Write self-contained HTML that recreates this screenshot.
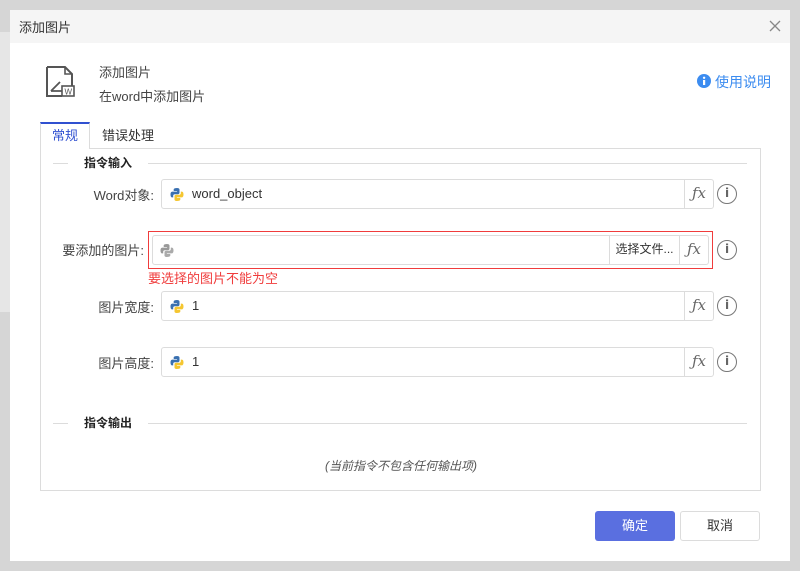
<!DOCTYPE html>
<html><head><meta charset="utf-8"><style>
*{box-sizing:border-box;margin:0;padding:0}
body{width:800px;height:571px;background:#d6d6d6;font-family:"Liberation Sans","Noto Sans CJK SC",sans-serif;font-size:13px;color:#333;position:relative;overflow:hidden}
.dlg{position:absolute;left:10px;top:10px;width:780px;height:551px;background:#fff}
.hd{position:absolute;left:0;top:0;width:780px;height:33px;background:#f5f5f5}
.a{position:absolute}
.inp{position:absolute;border:1px solid #dcdcdc;border-radius:3px;background:#fff}
.fx{position:absolute;right:0;top:0;width:29px;height:100%;border-left:1px solid #dcdcdc;font-family:"DejaVu Serif",serif;font-style:italic;color:#666;font-size:15px;text-align:center;line-height:27px}
.info{position:absolute;width:20px;height:20px;border:1.5px solid #777;border-radius:50%;color:#666;font-size:12px;font-weight:bold;text-align:center;line-height:17px;font-family:"DejaVu Sans",sans-serif}
.lbl{position:absolute;text-align:right;width:120px;color:#444}
.hl{position:absolute;height:1px;background:#dcdcdc}
</style></head><body>
<div class="a" style="left:0;top:32px;width:10px;height:280px;background:#e6e6e6"></div>
<div class="dlg">
<div class="hd"><span class="a" style="left:9px;top:7px;font-size:13px;color:#333">添加图片</span>
<svg class="a" style="left:759px;top:10px" width="12" height="12"><path d="M1 1L11 11M11 1L1 11" stroke="#888" stroke-width="1.3"/></svg></div>
<svg class="a" style="left:35px;top:55px" width="32" height="34" viewBox="0 0 32 34"><path d="M2 2H20L27 9V21M17 31H2V2" fill="none" stroke="#555" stroke-width="2"/><path d="M20 2V9H27" fill="none" stroke="#555" stroke-width="1.6"/><path d="M6 26L15 17M6 26H17" stroke="#555" stroke-width="1.8" fill="none"/><rect x="17" y="21" width="12" height="10" fill="#fff" stroke="#555" stroke-width="1.6"/><text x="19.5" y="29.5" font-size="8" fill="#555" font-family="Liberation Sans">W</text></svg>
<span class="a" style="left:89px;top:52px;color:#444">添加图片</span>
<span class="a" style="left:89px;top:76px;color:#444">在word中添加图片</span>
<svg class="a" style="left:687px;top:64px" width="14" height="14"><circle cx="7" cy="7" r="7" fill="#3c8cf0"/><rect x="6" y="6" width="2.2" height="5" fill="#fff"/><circle cx="7.1" cy="3.8" r="1.2" fill="#fff"/></svg>
<span class="a" style="left:705px;top:62px;color:#3c8cf0;font-size:14px">使用说明</span>
<div class="a" style="left:30px;top:138px;width:721px;height:343px;border:1px solid #dcdcdc"></div>
<div class="a" style="left:30px;top:112px;width:50px;height:27px;background:#fff;border:1px solid #dcdcdc;border-top:2px solid #3050d0;border-bottom:none;color:#3050d0;text-align:center;line-height:23px">常规</div>
<span class="a" style="left:92px;top:115px;color:#333">错误处理</span>
<div class="hl" style="left:43px;top:153px;width:15px"></div><b class="a" style="left:74px;top:144px;font-size:12px;color:#222">指令输入</b><div class="hl" style="left:138px;top:153px;width:599px"></div>
<div class="hl" style="left:43px;top:413px;width:15px"></div><b class="a" style="left:74px;top:404px;font-size:12px;color:#222">指令输出</b><div class="hl" style="left:138px;top:413px;width:599px"></div>
<span class="a" style="left:315px;top:447px;font-style:italic;color:#555;font-size:12px">(当前指令不包含任何输出项)</span>

<div class="lbl" style="left:24px;top:175px">Word对象:</div>
<div class="inp" style="left:151px;top:169px;width:553px;height:30px"><span class="a" style="left:30px;top:6px;color:#333">word_object</span><div class="fx">ƒx</div></div>
<div class="info" style="left:707px;top:174px">i</div>

<div class="lbl" style="left:14px;top:230px">要添加的图片:</div>
<div class="a" style="left:138px;top:221px;width:565px;height:38px;border:1px solid #f03c3c"></div>
<div class="inp" style="left:142px;top:225px;width:557px;height:30px"><div class="a" style="right:29px;top:0;width:70px;height:28px;border-left:1px solid #dcdcdc;text-align:center;line-height:27px;font-size:12px;color:#333">选择文件...</div><div class="fx">ƒx</div></div>
<div class="info" style="left:707px;top:230px">i</div>
<span class="a" style="left:138px;top:258px;color:#f03c3c">要选择的图片不能为空</span>

<div class="lbl" style="left:24px;top:287px">图片宽度:</div>
<div class="inp" style="left:151px;top:281px;width:553px;height:30px"><span class="a" style="left:30px;top:6px">1</span><div class="fx">ƒx</div></div>
<div class="info" style="left:707px;top:286px">i</div>

<div class="lbl" style="left:24px;top:343px">图片高度:</div>
<div class="inp" style="left:151px;top:337px;width:553px;height:30px"><span class="a" style="left:30px;top:6px">1</span><div class="fx">ƒx</div></div>
<div class="info" style="left:707px;top:342px">i</div>

<div class="a" style="left:585px;top:501px;width:80px;height:30px;background:#5a6fe0;border-radius:3px;color:#fff;text-align:center;line-height:30px">确定</div>
<div class="a" style="left:670px;top:501px;width:80px;height:30px;border:1px solid #dcdcdc;border-radius:3px;color:#333;text-align:center;line-height:28px">取消</div>
</div>
<svg style="position:absolute;left:0;top:0" width="800" height="571">
<defs><g id="py"><path d="M7 1C3.5 1 3.7 2.5 3.7 2.5V4H7.1V4.6H2.4S0.5 4.4 0.5 7.5 2.2 10.4 2.2 10.4H3.2V8.9S3.1 7.2 4.9 7.2H7.9S9.5 7.2 9.5 5.6V2.8S9.8 1 7 1Z" fill="#3a70b0"/><path d="M7 14C10.5 14 10.3 12.5 10.3 12.5V11H6.9V10.4H11.6S13.5 10.6 13.5 7.5 11.8 4.6 11.8 4.6H10.8V6.1S10.9 7.8 9.1 7.8H6.1S4.5 7.8 4.5 9.4V12.2S4.2 14 7 14Z" fill="#f5c630"/></g>
<g id="pyg"><path d="M7 1C3.5 1 3.7 2.5 3.7 2.5V4H7.1V4.6H2.4S0.5 4.4 0.5 7.5 2.2 10.4 2.2 10.4H3.2V8.9S3.1 7.2 4.9 7.2H7.9S9.5 7.2 9.5 5.6V2.8S9.8 1 7 1Z" fill="#999"/><path d="M7 14C10.5 14 10.3 12.5 10.3 12.5V11H6.9V10.4H11.6S13.5 10.6 13.5 7.5 11.8 4.6 11.8 4.6H10.8V6.1S10.9 7.8 9.1 7.8H6.1S4.5 7.8 4.5 9.4V12.2S4.2 14 7 14Z" fill="#aaa"/></g></defs>
<use href="#py" x="170" y="187"/><use href="#pyg" x="160" y="243"/><use href="#py" x="170" y="299"/><use href="#py" x="170" y="355"/>
</svg>
</body></html>
